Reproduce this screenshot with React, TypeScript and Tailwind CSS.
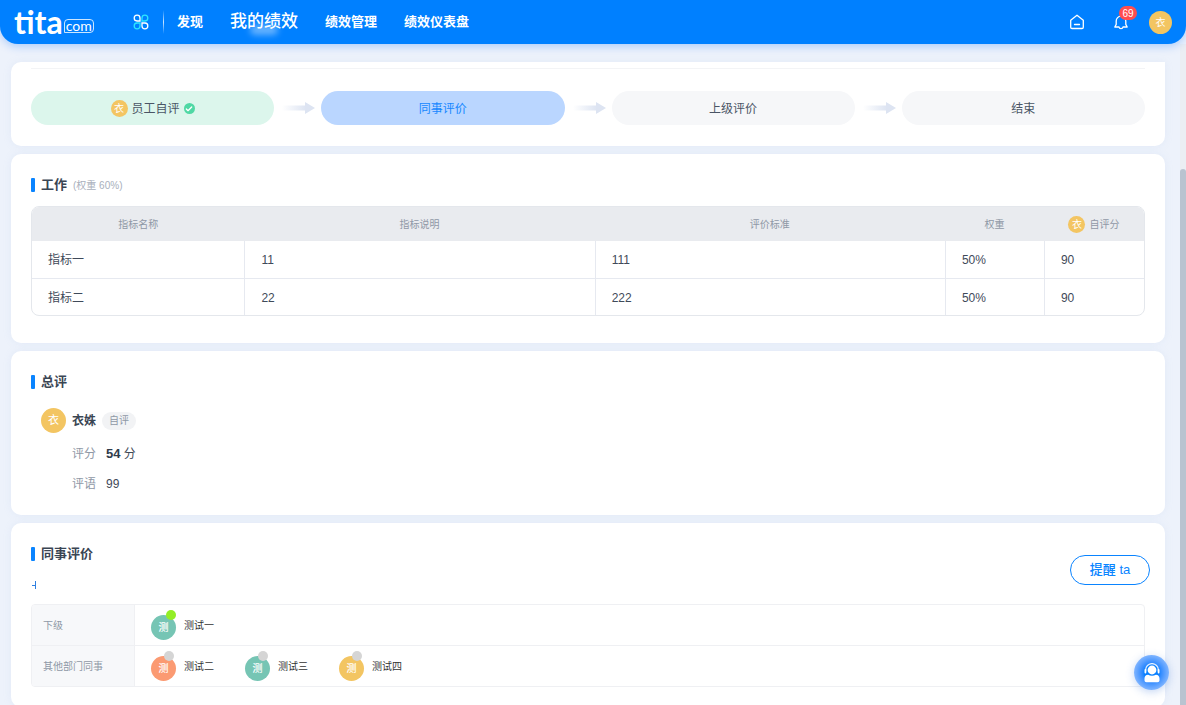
import { clsx } from "clsx";
import { Check } from "lucide-react";
import type { ReactNode } from "react";

const NAV_ITEMS = [
  { label: "发现", active: false },
  { label: "我的绩效", active: true },
  { label: "绩效管理", active: false },
  { label: "绩效仪表盘", active: false },
];

const INDICATORS = [
  { name: "指标一", desc: "11", standard: "111", weight: "50%", score: "90" },
  { name: "指标二", desc: "22", standard: "222", weight: "50%", score: "90" },
];

const REVIEWERS = [
  { relation: "下级", people: [{ name: "测试一", color: "bg-[#76c5b4]", done: true }] },
  {
    relation: "其他部门同事",
    people: [
      { name: "测试二", color: "bg-[#fb9a72]", done: false },
      { name: "测试三", color: "bg-[#76c5b4]", done: false },
      { name: "测试四", color: "bg-[#f3c562]", done: false },
    ],
  },
];

function Avatar({ text, className }: { text: string; className?: string }) {
  return (
    <span className={clsx("flex shrink-0 items-center justify-center rounded-full text-white", className)}>
      {text}
    </span>
  );
}

function Card({ children, className }: { children: ReactNode; className?: string }) {
  return (
    <section className={clsx("shrink-0 rounded-[10px] bg-white shadow-[0_0_8px_rgba(160,185,225,0.12)]", className)}>
      {children}
    </section>
  );
}

function SectionTitle({ children, note }: { children: ReactNode; note?: string }) {
  return (
    <div className="flex h-5 items-center">
      <span className="h-3.5 w-1 rounded-[1px] bg-[#0a84ff]" />
      <h2 className="ml-1.5 text-[13px] font-bold text-[#3a4553]">{children}</h2>
      {note && <span className="ml-1.5 text-[10px] text-[#a9b0bc]">{note}</span>}
    </div>
  );
}

function Logo() {
  return (
    <a href="#" className="flex w-[82px] items-center text-white" aria-label="tita.com">
      <span className="font-[Lato] text-[32px] leading-8 font-bold">tita</span>
      <span className="mt-2 ml-px flex h-3.5 items-center rounded-[4px] rounded-bl-none border border-white/80 px-px font-[Lato] text-[14px] leading-3">
        com
      </span>
    </a>
  );
}

function AppsIcon() {
  return (
    <svg width="16" height="16" viewBox="0 0 16 16" fill="none" strokeWidth="1.3">
      <path d="M7 7H4a2.9 2.9 0 1 1 3-3z" stroke="#fff" />
      <path d="M9 7h3a2.9 2.9 0 1 0-3-3z" stroke="#2ce6ff" />
      <path d="M7 9H4a2.9 2.9 0 1 0 3 3z" stroke="#2ce6ff" />
      <path d="M9 9h3a2.9 2.9 0 1 1-3 3z" stroke="#fff" />
    </svg>
  );
}

function HomeIcon() {
  return (
    <svg width="16" height="16" viewBox="0 0 16 16" fill="none" stroke="#fff" strokeWidth="1.3" strokeLinejoin="round">
      <path d="M1.7 6.3 8 1.2l6.3 5.1v6.9a1.3 1.3 0 0 1-1.3 1.3H3a1.3 1.3 0 0 1-1.3-1.3z" />
      <path d="M5.5 10.5h5" strokeLinecap="round" />
    </svg>
  );
}

function BellIcon() {
  return (
    <svg width="16" height="16" viewBox="0 0 16 16" fill="none" stroke="#fff" strokeWidth="1.3" strokeLinejoin="round">
      <path d="M3.2 7a4.8 4.8 0 0 1 9.6 0v3.4l1.4 2.6H10c-.4 2.2-3.6 2.2-4 0H1.8l1.4-2.6z" />
    </svg>
  );
}

function Header() {
  return (
    <header className="relative z-10 flex h-11 shrink-0 items-center rounded-b-[18px] bg-[#0080ff] px-3.5 shadow-[0_2px_10px_rgba(0,110,255,0.3)]">
      <Logo />
      <button type="button" className="ml-[37px]" aria-label="应用">
        <AppsIcon />
      </button>
      <span className="ml-3.5 h-6 w-px bg-linear-to-b from-white/0 via-white/80 to-white/0" />
      <nav className="ml-[13px] flex items-center gap-[27px] text-[13px] font-bold text-white">
        {NAV_ITEMS.map((item) => (
          <a
            key={item.label}
            href="#"
            className={clsx("whitespace-nowrap", item.active && "relative text-[17px] font-medium")}
          >
            {item.active && (
              <span className="absolute bottom-0 left-1/2 h-2.5 w-7 -translate-x-1/2 rounded-full bg-white/40 blur-[3px]" />
            )}
            <span className="relative">{item.label}</span>
          </a>
        ))}
      </nav>
      <div className="ml-auto flex items-center">
        <button type="button" aria-label="首页">
          <HomeIcon />
        </button>
        <button type="button" className="relative ml-7" aria-label="通知">
          <BellIcon />
          <span className="absolute -top-2 left-1.5 flex h-3.5 w-[18px] items-center justify-center rounded-full bg-[#ff4d4f] text-[10px] text-white">
            69
          </span>
        </button>
        <button type="button" className="ml-5" aria-label="个人中心">
          <Avatar text="衣" className="size-[23px] bg-[#f3c562] text-[10px]" />
        </button>
      </div>
    </header>
  );
}

function StepArrow() {
  return (
    <svg className="w-[47px] shrink-0" height="12" viewBox="0 0 47 12">
      <defs>
        <linearGradient id="arrow-fade" x1="0" x2="1">
          <stop offset="0" stopColor="#dde4f2" stopOpacity="0" />
          <stop offset="1" stopColor="#dde4f2" />
        </linearGradient>
      </defs>
      <rect x="8" y="3.5" width="24" height="5" fill="url(#arrow-fade)" />
      <path d="M31 0l10 6-10 6z" fill="#dde4f2" />
    </svg>
  );
}

function Steps() {
  const base = "flex h-[34px] flex-1 items-center justify-center rounded-full pt-px text-xs";
  return (
    <Card className="rounded-tr-none px-5 pt-1.5 pb-[21px]">
      <div className="h-px bg-[#f3f4f6]" />
      <div className="mt-[22px] flex items-center">
        <div className={clsx(base, "gap-1 bg-[#dcf6ec] text-[#4a5565]")}>
          <Avatar text="衣" className="size-[17px] bg-[#f3c562] text-[10px]" />
          员工自评
          <span className="flex size-[11px] items-center justify-center rounded-full bg-[#4fd8a4]">
            <Check size={8} strokeWidth={4} className="text-white" />
          </span>
        </div>
        <StepArrow />
        <div className={clsx(base, "bg-[#bad6ff] text-[#1687ff]")}>同事评价</div>
        <StepArrow />
        <div className={clsx(base, "bg-[#f6f7f9] text-[#4a5565]")}>上级评价</div>
        <StepArrow />
        <div className={clsx(base, "bg-[#f6f7f9] text-[#4a5565]")}>结束</div>
      </div>
    </Card>
  );
}

function WorkCard() {
  const th = "p-0 text-center font-normal";
  const td = "border-l border-[#e6e9f0] pt-px pb-0 pl-4 first:border-l-0";
  return (
    <Card className="px-5 pt-[21px] pb-[27px]">
      <SectionTitle note="(权重 60%)">工作</SectionTitle>
      <div className="mt-[11px] overflow-hidden rounded-lg border border-[#e4e7ec]">
        <table className="w-full table-fixed border-separate border-spacing-0">
          <colgroup>
            <col className="w-[19.1%]" />
            <col className="w-[31.5%]" />
            <col className="w-[31.5%]" />
            <col className="w-[8.9%]" />
            <col className="w-[9%]" />
          </colgroup>
          <thead>
            <tr className="h-[34px] bg-[#e9ebef] text-[10px] text-[#8f98a6]">
              <th className={th}>指标名称</th>
              <th className={th}>指标说明</th>
              <th className={th}>评价标准</th>
              <th className={th}>权重</th>
              <th className={th}>
                <div className="flex items-center justify-center gap-1">
                  <Avatar text="衣" className="size-[17px] bg-[#f3c562]" />
                  自评分
                </div>
              </th>
            </tr>
          </thead>
          <tbody className="text-xs text-[#3f4a59]">
            {INDICATORS.map((row, i) => (
              <tr key={row.name} className="h-[37px]">
                {[row.name, row.desc, row.standard, row.weight, row.score].map((value, j) => (
                  <td key={j} className={clsx(td, i > 0 && "border-t")}>
                    {value}
                  </td>
                ))}
              </tr>
            ))}
          </tbody>
        </table>
      </div>
    </Card>
  );
}

function SummaryCard() {
  return (
    <Card className="px-5 pt-[21px] pb-[21px]">
      <SectionTitle>总评</SectionTitle>
      <div className="mt-4 ml-2.5 flex h-[25px] items-center">
        <Avatar text="衣" className="size-[25px] bg-[#f3c562] text-[11px]" />
        <span className="ml-1.5 text-xs font-bold text-[#3a4553]">衣姝</span>
        <span className="ml-1.5 flex h-[18px] items-center rounded-full bg-[#f2f3f5] px-[7px] text-[10px] text-[#8f98a6]">
          自评
        </span>
      </div>
      <dl className="ml-[41px] text-xs text-[#3f4a59]">
        <div className="mt-[11px] flex h-5 items-center gap-2.5">
          <dt className="text-[#8f98a6]">评分</dt>
          <dd>
            <strong className="text-[13px] text-[#2f3b4a]">54</strong> 分
          </dd>
        </div>
        <div className="mt-2.5 flex h-5 items-center gap-2.5">
          <dt className="text-[#8f98a6]">评语</dt>
          <dd>99</dd>
        </div>
      </dl>
    </Card>
  );
}

function ReviewerCard() {
  return (
    <Card className="pt-[21px] pb-5">
      <div className="flex items-center justify-between pr-[15px] pl-5">
        <div>
          <SectionTitle>同事评价</SectionTitle>
          <button type="button" className="mt-[11px] flex h-5 items-center" aria-label="展开">
            <svg width="8" height="8" viewBox="0 0 8 8" stroke="#2f7fe0" strokeWidth="1">
              <path d="M1 4.5h4M4.5 0v8" />
            </svg>
          </button>
        </div>
        <button
          type="button"
          className="h-[30px] w-20 rounded-full border border-[#0a84ff] text-[13px] font-medium text-[#0a84ff]"
        >
          提醒 ta
        </button>
      </div>
      <div className="mx-5 mt-[9px] overflow-hidden rounded border border-[#eff0f3]">
        <table className="w-full table-fixed border-separate border-spacing-0 text-[10px]">
          <tbody>
            {REVIEWERS.map((row, i) => (
              <tr key={row.relation} className={i > 0 ? "h-[41px]" : "h-10"}>
                <th
                  scope="row"
                  className={clsx(
                    "w-[103px] border-r border-[#eff0f3] bg-[#f7f8fa] py-0 pr-0 pl-[11px] text-left font-normal text-[#8f98a6]",
                    i > 0 && "border-t",
                  )}
                >
                  {row.relation}
                </th>
                <td className={clsx("border-[#eff0f3] py-0 pr-0 pl-4", i > 0 && "border-t")}>
                  <div className="flex items-center gap-[31px]">
                    {row.people.map((p) => (
                      <div key={p.name} className="flex items-center gap-2 text-[#333]">
                        <div className="relative pt-[5px]">
                          <Avatar text="测" className={clsx("size-[25px] font-medium", p.color)} />
                          <span
                            className={clsx(
                              "absolute top-0 size-2.5 rounded-full",
                              p.done ? "right-0 bg-[#93ee26]" : "right-0.5 bg-[#d5d5d5]",
                            )}
                          />
                        </div>
                        {p.name}
                      </div>
                    ))}
                  </div>
                </td>
              </tr>
            ))}
          </tbody>
        </table>
      </div>
    </Card>
  );
}

function SupportButton() {
  return (
    <button
      type="button"
      aria-label="客服"
      className="fixed right-[17px] bottom-[15px] z-20 flex size-[35px] items-center justify-center rounded-full bg-radial from-[#0a80ff] from-30% to-[#7db3ff] to-70% shadow-[0_2px_8px_rgba(60,120,220,0.3)]"
    >
      <svg width="18" height="20" viewBox="0 0 18 20" fill="none">
        <circle cx="9" cy="7" r="4.4" fill="#fff" />
        <path d="M2.6 8.5V7a6.4 6.4 0 0 1 12.8 0v1.5" stroke="#e4f0ff" strokeWidth="1.3" />
        <path d="M2.4 6.8v2.8M15.6 6.8v2.8" stroke="#fff" strokeWidth="1.8" strokeLinecap="round" />
        <path d="M1.5 15.5c0-2.3 1.4-3.7 3.6-3.7 2.4 1.4 5.4 1.4 7.8 0 2.2 0 3.6 1.4 3.6 3.7v1.8c0 1.2-.8 1.9-2 1.9h-11c-1.2 0-2-.7-2-1.9z" fill="#fff" />
      </svg>
    </button>
  );
}

export default function App() {
  return (
    <div className="flex h-screen flex-col overflow-hidden bg-[#edf2fb] font-['Liberation_Sans','Noto_Sans_CJK_SC',sans-serif]">
      <Header />
      <div className="flex min-h-0 flex-1">
        <main className="flex min-w-0 flex-1 flex-col gap-2 overflow-hidden pt-[18px] pr-[15px] pl-[11px]">
          <Steps />
          <WorkCard />
          <SummaryCard />
          <ReviewerCard />
        </main>
        {/* Scroll track */}
        <div className="flex w-1.5 flex-col bg-[#ebeef3] pt-[125px]">
          <div className="flex-1 rounded-t-full bg-[#b9c3d0]" />
        </div>
      </div>
      <SupportButton />
    </div>
  );
}
